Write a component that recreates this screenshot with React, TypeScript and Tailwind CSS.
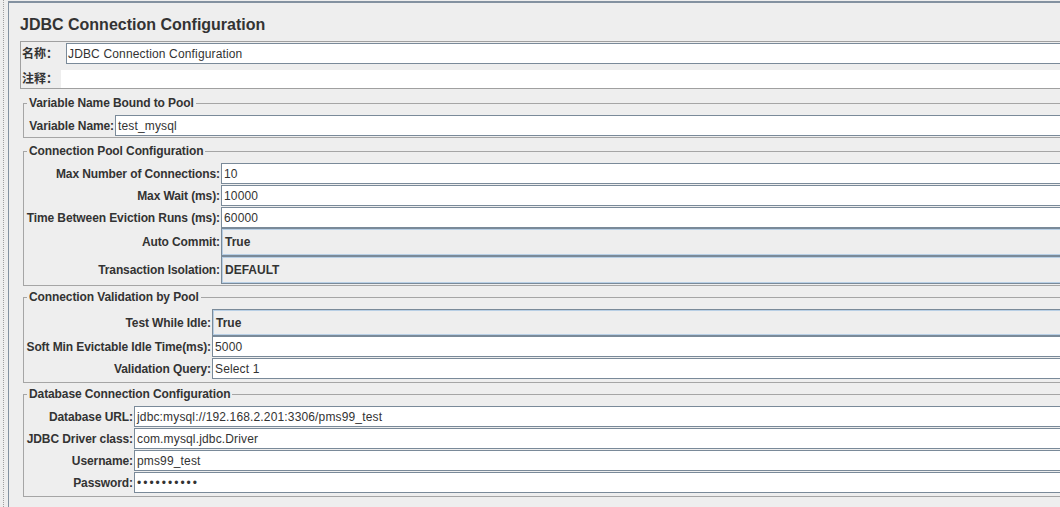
type Field = {
  label: string;
  value: string;
  kind: 'text' | 'combo' | 'password';
  row: string;
};

type Group = {
  title: string;
  labelWidth: string;
  frame: string;
  fields: Field[];
};

const groups: Group[] = [
  {
    title: 'Variable Name Bound to Pool',
    labelWidth: 'w-[88px]',
    frame: 'mt-[7px] pb-[1px]',
    fields: [{ label: 'Variable Name:', value: 'test_mysql', kind: 'text', row: 'h-[21px]' }],
  },
  {
    title: 'Connection Pool Configuration',
    labelWidth: 'w-[194px]',
    frame: 'mt-[6px] pb-[1px]',
    fields: [
      { label: 'Max Number of Connections:', value: '10', kind: 'text', row: 'h-[21px]' },
      { label: 'Max Wait (ms):', value: '10000', kind: 'text', row: 'h-[21px] mt-[1px]' },
      { label: 'Time Between Eviction Runs (ms):', value: '60000', kind: 'text', row: 'h-[21px] mt-[1px]' },
      { label: 'Auto Commit:', value: 'True', kind: 'combo', row: 'h-[28px]' },
      { label: 'Transaction Isolation:', value: 'DEFAULT', kind: 'combo', row: 'h-[28px]' },
    ],
  },
  {
    title: 'Connection Validation by Pool',
    labelWidth: 'w-[185px]',
    frame: 'mt-[4px] pb-[3px]',
    fields: [
      { label: 'Test While Idle:', value: 'True', kind: 'combo', row: 'h-[27px]' },
      { label: 'Soft Min Evictable Idle Time(ms):', value: '5000', kind: 'text', row: 'h-[21px]' },
      { label: 'Validation Query:', value: 'Select 1', kind: 'text', row: 'h-[21px] mt-[1px]' },
    ],
  },
  {
    title: 'Database Connection Configuration',
    labelWidth: 'w-[107px]',
    frame: 'mt-[4px] pb-[3px]',
    fields: [
      { label: 'Database URL:', value: 'jdbc:mysql://192.168.2.201:3306/pms99_test', kind: 'text', row: 'h-[21px]' },
      { label: 'JDBC Driver class:', value: 'com.mysql.jdbc.Driver', kind: 'text', row: 'h-[21px] mt-[1px]' },
      { label: 'Username:', value: 'pms99_test', kind: 'text', row: 'h-[21px] mt-[1px]' },
      { label: 'Password:', value: '••••••••••', kind: 'password', row: 'h-[21px] mt-[1px]' },
    ],
  },
];

function FieldRow({ field, labelWidth }: { field: Field; labelWidth: string }) {
  return (
    <div className={`flex ${field.row}`}>
      <span
        className={`${labelWidth} shrink-0 flex items-center justify-end pr-[1px] font-bold tracking-[-0.1px] whitespace-nowrap`}
      >
        {field.label}
      </span>
      {field.kind === 'combo' ? (
        <div className="flex-1 flex items-center border border-[#7a8a99] shadow-[inset_0_0_0_1px_#b8cfe5] bg-[#eeeeee] pl-[3px] font-bold">
          {field.value}
        </div>
      ) : (
        <div className="flex-1 flex items-center border border-[#7a8a99] bg-white pl-[2px] tracking-[0.15px] whitespace-nowrap">
          {field.kind === 'password' ? (
            <span className="tracking-[2px]">{field.value}</span>
          ) : (
            field.value
          )}
        </div>
      )}
    </div>
  );
}

export default function App() {
  return (
    <div className="flex h-[507px] w-[1060px] overflow-hidden bg-[#eeeeee] font-['Liberation_Sans','Noto_Sans_CJK_SC',sans-serif] text-[12px] text-[#333333]">
      {/* tree splitter */}
      <div className="w-[8px] shrink-0 pl-[3px]">
        <div className="h-full border-l border-dotted border-[#a0a0a0]" />
      </div>

      <div className="mt-[1px] w-[1120px] shrink-0 border-l border-t-2 border-[#8391a0] pl-[11px] pt-[12px]">
        <h1 className="text-[16px] font-bold leading-[19px]">JDBC Connection Configuration</h1>

        {/* Name / comments */}
        <div className="mt-[7px] border border-[#a0a0a0] pl-[1px] pt-[1px]">
          <div className="flex h-[21px]">
            <span className="w-[44px] shrink-0 flex items-center font-bold">名称：</span>
            <div className="flex-1 flex items-center border border-[#7a8a99] bg-white pl-[1px] tracking-[0.15px]">
              JDBC Connection Configuration
            </div>
          </div>
          <div className="mt-[6px] flex h-[18px]">
            <span className="w-[39px] shrink-0 flex items-center font-bold">注释：</span>
            <div className="flex-1 bg-white" />
          </div>
        </div>

        {groups.map((group) => (
          <fieldset
            key={group.title}
            className={`ml-[3px] border border-[#a5a5a5] pl-[3px] pt-[5px] ${group.frame}`}
          >
            <legend className="px-[2px] font-bold leading-[14px] tracking-[-0.1px]">{group.title}</legend>
            {group.fields.map((field) => (
              <FieldRow key={field.label} field={field} labelWidth={group.labelWidth} />
            ))}
          </fieldset>
        ))}
      </div>
    </div>
  );
}
